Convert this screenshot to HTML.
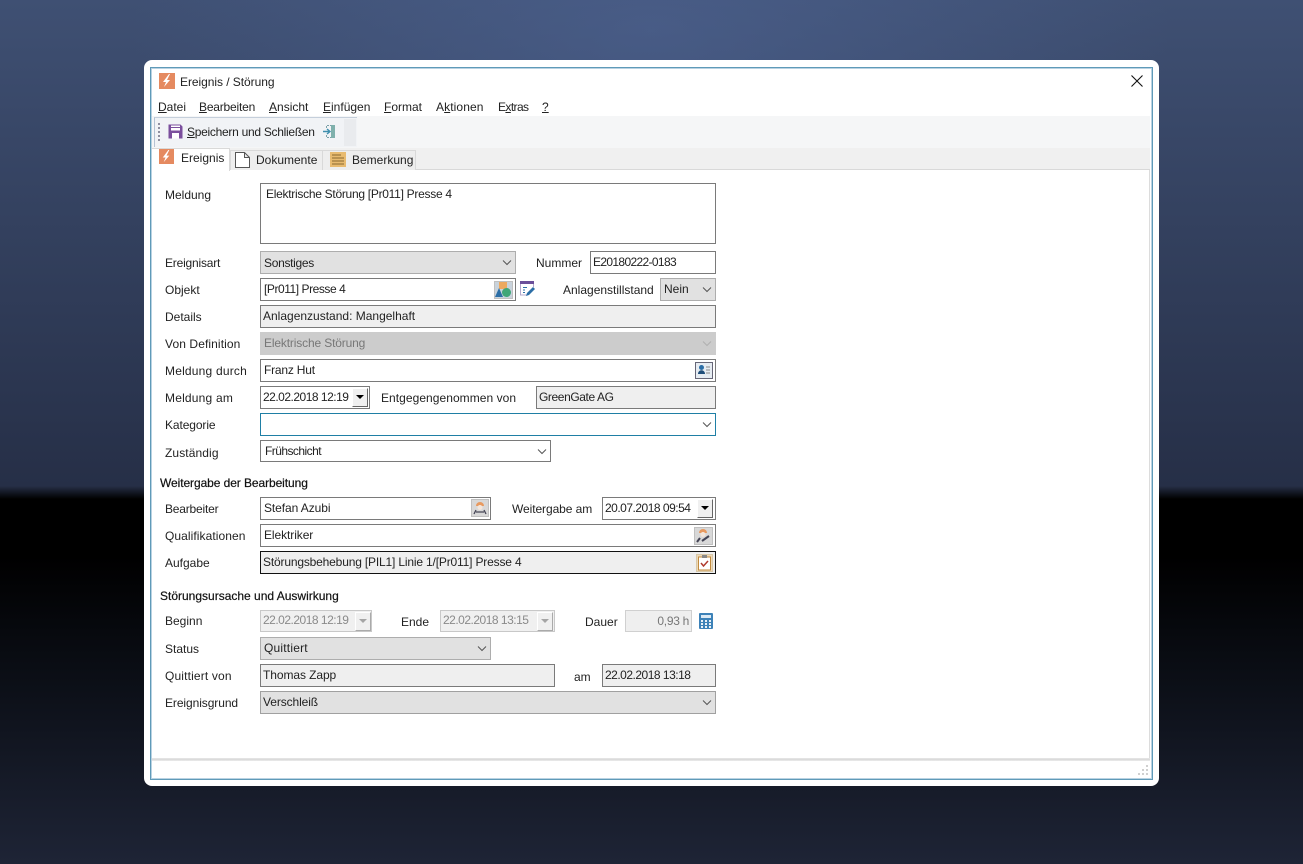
<!DOCTYPE html>
<html lang="de"><head><meta charset="utf-8"><title>Ereignis / Störung</title>
<style>
html,body{margin:0;padding:0;width:1303px;height:864px;overflow:hidden;background:#000}
body{position:relative;font:12px/16px "Liberation Sans",sans-serif;color:#222}
#bg1{position:absolute;left:0;top:0;width:1303px;height:486px;background:linear-gradient(#3f5073,#262f47)}
#bg1b{position:absolute;left:0;top:0;width:1303px;height:486px;background:radial-gradient(ellipse 520px 260px at 651px 30px,rgba(82,105,155,.5),rgba(82,105,155,0))}
#bg2{position:absolute;left:0;top:486px;width:1303px;height:378px;background:linear-gradient(#262f47 0,#000 13px,#000 70px,#0a0d14 180px,#1e2436 378px)}
#win{position:absolute;left:144px;top:60px;width:1015px;height:726px;background:#fff;border-radius:8px}
#inner{position:absolute;left:150px;top:67px;width:1001px;height:711px;border:1px solid #5f9ab8;background:#fff;box-shadow:inset 1px 1px 0 #b9d2e2,inset -1px -1px 0 #b9d2e2}
div.a{position:absolute;white-space:nowrap;box-sizing:border-box}
.t{position:absolute;white-space:nowrap;line-height:16px}
.f{position:absolute;box-sizing:border-box;border:1px solid #7a7a7a;background:#fff;white-space:nowrap;padding-left:3px;line-height:20px;overflow:hidden}
.g{background:#efefef}
.s{background:#e1e1e1;border-color:#adadad}
.dis{color:#8a8a8a;background:#f0f0f0;border-color:#c8c8c8}
.ch{position:absolute;right:3px;top:7px;width:10px;height:7px}
.btn{position:absolute;box-sizing:border-box;border-top:1px solid #fff;border-left:1px solid #fff;border-right:1px solid #666;border-bottom:1px solid #666;background:#f0f0f0}
.btn:after{content:"";position:absolute;left:3px;top:6px;border-left:4px solid transparent;border-right:4px solid transparent;border-top:4px solid #000}
.btn.d{border-right-color:#aaa;border-bottom-color:#aaa}
.btn.d:after{border-top-color:#a5a5a5}
.ib{position:absolute;width:18px;height:17px;background:#dcdcdc;border:1px solid #c0c0c0;box-sizing:border-box}
u{text-decoration:underline}
svg{position:absolute;display:block}
</style></head><body>
<div id="bg1"></div><div id="bg1b"></div><div id="bg2"></div>
<div id="win"></div><div id="inner"></div>

<!-- Title bar -->
<svg style="left:159px;top:73px" width="16" height="16" viewBox="0 0 16 16"><rect width="16" height="16" fill="#e58a60"/><path d="M10 1 4 9h3l-2 5 6-7H8l3-6z" fill="#fff"/></svg>
<div class="t" style="left:180px;top:74px;letter-spacing:-.05px">Ereignis / Störung</div>
<svg style="left:1131px;top:75px" width="12" height="12" viewBox="0 0 12 12"><path d="M.5.5l11 11M11.500.5l-11 11" stroke="#111" stroke-width="1.100" fill="none"/></svg>

<!-- Menu -->
<div class="t" style="left:158px;top:99px"><u>D</u>atei</div>
<div class="t" style="left:199px;top:99px;letter-spacing:-.2px"><u>B</u>earbeiten</div>
<div class="t" style="left:269px;top:99px"><u>A</u>nsicht</div>
<div class="t" style="left:323px;top:99px"><u>E</u>infügen</div>
<div class="t" style="left:384px;top:99px"><u>F</u>ormat</div>
<div class="t" style="left:436px;top:99px;letter-spacing:.1px">A<u>k</u>tionen</div>
<div class="t" style="left:498px;top:99px;letter-spacing:-.6px">E<u>x</u>tras</div>
<div class="t" style="left:542px;top:99px"><u>?</u></div>

<!-- Toolbar -->
<div class="a" style="left:152px;top:116px;width:998px;height:32px;background:#f5f6f7"></div>
<div class="a" style="left:154px;top:117px;width:203px;height:30px;background:#f1f3f6;border-left:1px solid #b5c2d3;border-top:1px solid #c5cfdb"></div>
<div class="a" style="left:344px;top:119px;width:12px;height:27px;background:#e9ebee"></div>
<div class="a" style="left:158px;top:123px;width:2px;height:20px;background:repeating-linear-gradient(#8f8fa0 0 2px,transparent 2px 4px)"></div>
<svg style="left:168px;top:124px" width="15" height="15" viewBox="0 0 15 15"><path d="M.5.500h12l2 2v12H.5z" fill="#7b4f9d"/><rect x="3" y="1.500" width="9" height="5" fill="#fff"/><rect x="3" y="3" width="9" height="1" fill="#7b4f9d"/><rect x="4" y="9" width="7" height="5.500" fill="#fff"/></svg>
<div class="t" style="left:187px;top:124px;letter-spacing:-.28px"><u>S</u>peichern und Schließen</div>
<svg style="left:323px;top:124px" width="13" height="15" viewBox="0 0 13 15"><path d="M3.500 4V1.500H8M3.500 11v2.500H8" stroke="#7aa0a8" stroke-dasharray="2 1" fill="none"/><rect x="8" y="1" width="4" height="13" fill="#7fb0ac"/><path d="M0 7.500h6M4 5l3 2.500-3 2.500" stroke="#3f8fae" stroke-width="1.400" fill="none"/></svg>

<!-- Tabs -->
<div class="a" style="left:152px;top:148px;width:998px;height:22px;background:#f0f0f0;border-bottom:1px solid #d9d9d9"></div>
<div class="a" style="left:230px;top:150px;width:93px;height:20px;background:#eeeeee;border:1px solid #d9d9d9;border-bottom:0"></div>
<div class="a" style="left:323px;top:150px;width:93px;height:20px;background:#eeeeee;border:1px solid #d9d9d9;border-bottom:0;border-left:0"></div>
<div class="a" style="left:152px;top:148px;width:78px;height:23px;background:#fff;border-top:1px solid #d9d9d9;border-right:1px solid #d9d9d9"></div>
<svg style="left:159px;top:149px" width="15" height="15" viewBox="0 0 16 16"><rect width="16" height="16" fill="#e58a60"/><path d="M10 1 4 9h3l-2 5 6-7H8l3-6z" fill="#fff"/></svg>
<div class="t" style="left:181px;top:150px">Ereignis</div>
<svg style="left:235px;top:152px" width="15" height="16" viewBox="0 0 15 16"><path d="M.5.500h9l5 5v10H.5zM9.500.5v5h5" fill="#fff" stroke="#555"/></svg>
<div class="t" style="left:256px;top:152px">Dokumente</div>
<svg style="left:330px;top:152px" width="16" height="15" viewBox="0 0 16 15"><rect width="16" height="15" fill="#e8bb70"/><path d="M2 3h9M2 6h12M2 9h12M2 12h12" stroke="#8a6a30"/></svg>
<div class="t" style="left:352px;top:152px">Bemerkung</div>

<!-- Labels -->
<div class="t" style="left:165px;top:187px">Meldung</div>
<div class="t" style="left:165px;top:255px;letter-spacing:-.2px">Ereignisart</div>
<div class="t" style="left:165px;top:282px">Objekt</div>
<div class="t" style="left:165px;top:309px">Details</div>
<div class="t" style="left:165px;top:336px;letter-spacing:.1px">Von Definition</div>
<div class="t" style="left:165px;top:363px;letter-spacing:.2px">Meldung durch</div>
<div class="t" style="left:165px;top:390px;letter-spacing:.2px">Meldung am</div>
<div class="t" style="left:165px;top:417px;letter-spacing:-.1px">Kategorie</div>
<div class="t" style="left:165px;top:445px;letter-spacing:.1px">Zuständig</div>
<div class="t" style="left:160px;top:475px;color:#111;-webkit-text-stroke:.2px #111;letter-spacing:-.08px">Weitergabe der Bearbeitung</div>
<div class="t" style="left:165px;top:501px;letter-spacing:-.2px">Bearbeiter</div>
<div class="t" style="left:165px;top:528px;letter-spacing:.07px">Qualifikationen</div>
<div class="t" style="left:165px;top:555px">Aufgabe</div>
<div class="t" style="left:160px;top:588px;color:#111;-webkit-text-stroke:.2px #111">Störungsursache und Auswirkung</div>
<div class="t" style="left:165px;top:613px">Beginn</div>
<div class="t" style="left:165px;top:641px">Status</div>
<div class="t" style="left:165px;top:668px;letter-spacing:.15px">Quittiert von</div>
<div class="t" style="left:165px;top:695px;letter-spacing:-.08px">Ereignisgrund</div>
<div class="t" style="left:536px;top:255px">Nummer</div>
<div class="t" style="left:563px;top:282px">Anlagenstillstand</div>
<div class="t" style="left:381px;top:390px;letter-spacing:.05px">Entgegengenommen von</div>
<div class="t" style="left:512px;top:501px;letter-spacing:-.08px">Weitergabe am</div>
<div class="t" style="left:401px;top:614px">Ende</div>
<div class="t" style="left:585px;top:614px">Dauer</div>
<div class="t" style="left:574px;top:669px">am</div>

<!-- Fields -->
<div class="f" style="left:260px;top:183px;width:456px;height:61px;padding-left:5px;line-height:20px;letter-spacing:-.28px">Elektrische Störung [Pr011] Presse 4</div>

<div class="f s" style="left:260px;top:251px;width:256px;height:23px;line-height:22px;letter-spacing:-.3px">Sonstiges<svg class="ch" viewBox="0 0 10 7"><path d="M1 1.500l4 4 4-4" fill="none" stroke="#555"/></svg></div>
<div class="f" style="left:590px;top:251px;width:126px;height:23px;padding-left:2px;letter-spacing:-.65px">E20180222-0183</div>

<div class="f" style="left:260px;top:278px;width:256px;height:23px;line-height:21px;letter-spacing:-.45px">[Pr011] Presse 4</div>
<div class="ib" style="left:494px;top:281px;height:18px;width:19px;background:#c9d3dc"></div>
<svg style="left:495px;top:282px" width="17" height="16" viewBox="0 0 17 16"><rect x="4" y="0" width="8" height="7" fill="#eda95f"/><path d="M0 15l4-9 4 9z" fill="#2c6ea6"/><circle cx="11.500" cy="10.500" r="4.500" fill="#3fa678"/></svg>
<svg style="left:520px;top:281px" width="16" height="16" viewBox="0 0 16 16"><rect x="0" y="0" width="14" height="3" fill="#6b4f9a"/><path d="M.5 3v11h7M13.500 3v3" fill="none" stroke="#b5a8cc"/><path d="M3 6.500h4M3 9h2M3 11.500h2" stroke="#2c6ea6"/><path d="M6 15l1-3 6-6 2 2-6 6z" fill="#2c6ea6"/></svg>
<div class="f s" style="left:660px;top:278px;width:56px;height:23px;padding-left:3px;line-height:21px">Nein<svg class="ch" viewBox="0 0 10 7"><path d="M1 1.500l4 4 4-4" fill="none" stroke="#555"/></svg></div>

<div class="f g" style="left:260px;top:305px;width:456px;height:23px;padding-left:2px">Anlagenzustand: Mangelhaft</div>
<div class="f" style="left:260px;top:332px;width:456px;height:23px;background:#cccccc;border-color:#cccccc;color:#777;letter-spacing:-.15px;line-height:21px">Elektrische Störung<svg class="ch" viewBox="0 0 10 7"><path d="M1 1.500l4 4 4-4" fill="none" stroke="#b0b0b0"/></svg></div>

<div class="f" style="left:260px;top:359px;width:456px;height:23px;letter-spacing:-.2px;line-height:21px">Franz Hut</div>
<div class="ib" style="left:695px;top:362px;height:17px;background:#e6ecf2;border-color:#667"></div>
<svg style="left:697px;top:364px" width="14" height="13" viewBox="0 0 14 13"><circle cx="4.500" cy="3.500" r="2.500" fill="#2c6ea6"/><path d="M1 10c0-5 7-5 7 0z" fill="#1f4e7a"/><path d="M9 3h4M9 6h4M9 9h4" stroke="#888"/></svg>

<div class="f" style="left:260px;top:386px;width:110px;height:23px;padding-left:2px;line-height:20px;letter-spacing:-.5px">22.02.2018 12:19</div>
<div class="btn" style="left:352px;top:388px;width:16px;height:19px"></div>
<div class="f g" style="left:536px;top:386px;width:180px;height:23px;padding-left:2px;letter-spacing:-.4px">GreenGate AG</div>

<div class="f" style="left:260px;top:413px;width:456px;height:23px;border-color:#1f7fa5"><svg class="ch" viewBox="0 0 10 7"><path d="M1 1.500l4 4 4-4" fill="none" stroke="#555"/></svg></div>
<div class="f" style="left:260px;top:440px;width:291px;height:22px;padding-left:4px;letter-spacing:-.55px">Frühschicht<svg class="ch" viewBox="0 0 10 7"><path d="M1 1.500l4 4 4-4" fill="none" stroke="#555"/></svg></div>

<div class="f" style="left:260px;top:497px;width:231px;height:23px;letter-spacing:-.08px">Stefan Azubi</div>
<div class="ib" style="left:471px;top:499px;height:18px;width:18px;background:#d8d8d8"></div>
<svg style="left:473px;top:501px" width="14" height="14" viewBox="0 0 14 14"><path d="M3 5a4 4 0 0 1 8 0z" fill="#e89a60"/><circle cx="7" cy="6.500" r="2.500" fill="#f5e6da"/><path d="M1 13l2-4M13 13l-2-4M3 11h8" stroke="#445" stroke-width="1.300" fill="none"/></svg>
<div class="f" style="left:602px;top:497px;width:114px;height:23px;padding-left:2px;line-height:20px;letter-spacing:-.5px">20.07.2018 09:54</div>
<div class="btn" style="left:697px;top:499px;width:16px;height:19px"></div>

<div class="f" style="left:260px;top:524px;width:456px;height:23px;letter-spacing:-.08px">Elektriker</div>
<div class="ib" style="left:694px;top:527px;width:19px;height:18px;background:#d8d8d8"></div>
<svg style="left:696px;top:528px" width="15" height="15" viewBox="0 0 15 15"><path d="M3 5a4 4 0 0 1 8 0z" fill="#e89a60"/><circle cx="7" cy="6.500" r="2.500" fill="#f5e6da"/><path d="M1 14l3-4M6 13l7-5" stroke="#445" stroke-width="2" fill="none"/></svg>

<div class="f g" style="left:260px;top:551px;width:456px;height:23px;border-color:#111;padding-left:2px;letter-spacing:-.17px;line-height:21px">Störungsbehebung [PIL1] Linie 1/[Pr011] Presse 4</div>
<div class="ib" style="left:696px;top:554px;width:17px;height:18px;background:#eed9b8;border-color:#d8c8a8"></div>
<svg style="left:698px;top:555px" width="13" height="16" viewBox="0 0 13 16"><rect x=".5" y="2" width="12" height="13" fill="#fff" stroke="#c08a3e"/><rect x="4" y="0" width="5" height="3" fill="#888"/><path d="M3 8l2.500 3L10 6" fill="none" stroke="#b03a2e" stroke-width="1.500"/></svg>

<div class="f dis" style="left:260px;top:610px;width:112px;height:22px;padding-left:2px;line-height:18px;letter-spacing:-.5px">22.02.2018 12:19</div>
<div class="btn d" style="left:355px;top:612px;width:16px;height:19px"></div>
<div class="f dis" style="left:440px;top:610px;width:115px;height:22px;padding-left:2px;line-height:19px;letter-spacing:-.5px">22.02.2018 13:15</div>
<div class="btn d" style="left:537px;top:612px;width:16px;height:19px"></div>
<div class="f" style="left:625px;top:610px;width:67px;height:22px;background:#efefef;border-color:#d0d0d0;color:#777;padding:0 2px 0 0;text-align:right;letter-spacing:-.3px">0,93 h</div>
<svg style="left:699px;top:613px" width="14" height="16" viewBox="0 0 14 16"><rect width="14" height="16" rx="1" fill="#3d82b8"/><rect x="2" y="2" width="10" height="3" fill="#dceaf5"/><path d="M2 7h2v2H2zM6 7h2v2H6zM10 7h2v2h-2zM2 10h2v2H2zM6 10h2v2H6zM10 10h2v2h-2zM2 13h2v2H2zM6 13h2v2H6zM10 13h2v2h-2z" fill="#e8f1f8"/></svg>

<div class="f s" style="left:260px;top:637px;width:231px;height:23px;letter-spacing:.2px">Quittiert<svg class="ch" viewBox="0 0 10 7"><path d="M1 1.500l4 4 4-4" fill="none" stroke="#555"/></svg></div>
<div class="f g" style="left:260px;top:664px;width:295px;height:23px;padding-left:2px;letter-spacing:-.08px">Thomas Zapp</div>
<div class="f g" style="left:602px;top:664px;width:114px;height:23px;padding-left:2px;letter-spacing:-.5px">22.02.2018 13:18</div>
<div class="f s" style="left:260px;top:691px;width:456px;height:23px;border-color:#a0a0a0;padding-left:2px;letter-spacing:-.1px">Verschleiß<svg class="ch" viewBox="0 0 10 7"><path d="M1 1.500l4 4 4-4" fill="none" stroke="#555"/></svg></div>

<!-- Content right edge and status bar -->
<div class="a" style="left:1149px;top:170px;width:1px;height:590px;background:#dcdcdc"></div>
<div class="a" style="left:152px;top:758px;width:998px;height:3px;background:linear-gradient(#e8e8e8,#d8d8d8,#eeeeee)"></div>
<div class="a" style="left:1146px;top:765px;width:2px;height:2px;background:#d0d0d0;box-shadow:-4px 4px 0 #d0d0d0,0 4px 0 #d0d0d0,-8px 8px 0 #d0d0d0,-4px 8px 0 #d0d0d0,0 8px 0 #d0d0d0"></div>
</body></html>
